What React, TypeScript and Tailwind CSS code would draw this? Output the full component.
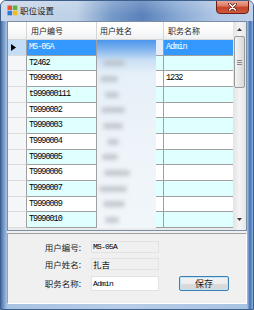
import React from 'react';

type Row = { id: string; job: string; h: string; sel?: boolean; cyan?: boolean };

const rows: Row[] = [
  { id: 'MS-05A', job: 'Admin', h: 'h-[16px]', sel: true },
  { id: 'T2462', job: '', h: 'h-[15px]', cyan: true },
  { id: 'T9990001', job: '1232', h: 'h-[16px]' },
  { id: 't999000111', job: '', h: 'h-[16px]', cyan: true },
  { id: 'T9990002', job: '', h: 'h-[15px]' },
  { id: 'T9990003', job: '', h: 'h-[16px]', cyan: true },
  { id: 'T9990004', job: '', h: 'h-[16px]' },
  { id: 'T9990005', job: '', h: 'h-[15px]', cyan: true },
  { id: 'T9990006', job: '', h: 'h-[16px]' },
  { id: 'T9990007', job: '', h: 'h-[16px]', cyan: true },
  { id: 'T9990009', job: '', h: 'h-[15px]' },
  { id: 'T9990010', job: '', h: 'h-[16px]', cyan: true },
];

const blobs = [
  { top: 'top-[20px]', w: 'w-[22px]', left: 'left-[6px]' },
  { top: 'top-[36px]', w: 'w-[18px]', left: 'left-[3px]' },
  { top: 'top-[52px]', w: 'w-[14px]', left: 'left-[8px]' },
  { top: 'top-[67px]', w: 'w-[24px]', left: 'left-[4px]' },
  { top: 'top-[83px]', w: 'w-[20px]', left: 'left-[6px]' },
  { top: 'top-[99px]', w: 'w-[12px]', left: 'left-[10px]' },
  { top: 'top-[114px]', w: 'w-[16px]', left: 'left-[5px]' },
  { top: 'top-[130px]', w: 'w-[26px]', left: 'left-[7px]' },
  { top: 'top-[146px]', w: 'w-[28px]', left: 'left-[2px]' },
  { top: 'top-[161px]', w: 'w-[22px]', left: 'left-[6px]' },
  { top: 'top-[177px]', w: 'w-[14px]', left: 'left-[8px]' },
];

const mono = "font-['Liberation_Mono','Noto_Sans_CJK_SC',monospace]";
const cjk = "font-['Noto_Sans_CJK_SC','Noto_Sans',sans-serif]";

function WinIcon() {
  return (
    <svg width="11" height="11" viewBox="0 0 11 11">
      <rect x="0.5" y="0.5" width="4.5" height="4.5" fill="#e9512f" />
      <rect x="5.8" y="0.5" width="4.5" height="4.5" fill="#5fb336" />
      <rect x="0.5" y="5.8" width="4.5" height="4.5" fill="#2c79d6" />
      <rect x="5.8" y="5.8" width="4.5" height="4.5" fill="#f5bb1b" />
    </svg>
  );
}

export default function App() {
  return (
    <div className="w-[254px] h-[310px] flex flex-col overflow-hidden rounded-t-[6px] border border-[#3d5f8c] bg-[linear-gradient(90deg,#4a70a8_0px,#7c9ecc_3px,#a9c3e3_6px,#b7cde8_50%,#a9c3e3_calc(100%_-_6px),#4070b2_calc(100%_-_3px),#8fb0da_100%)]">
      {/* title bar */}
      <div className="h-[20px] shrink-0 flex items-start bg-[linear-gradient(180deg,rgba(255,255,255,0.18),rgba(255,255,255,0)_70%),linear-gradient(90deg,#cbd8e9_0%,#bdd0e6_30%,#7599c9_44%,#5a81ba_56%,#87a8d3_70%,#afc6e5_85%,#bcd0e9_100%)]">
        <div className="ml-[6px] mt-[4px]">
          <WinIcon />
        </div>
        <div className={`${cjk} ml-[2px] mt-[2px] text-[8.5px] leading-[14px] text-[#1b1b1b]`}>职位设置</div>
        <div className="ml-auto mr-[4px] w-[33px] h-[14px] -mt-[1px] rounded-b-[4px] border border-[#6e1d12] bg-[linear-gradient(180deg,#eba898_0%,#dc7a63_40%,#c4422a_55%,#cf5a3c_100%)] flex items-center justify-center">
          <svg width="9" height="8" viewBox="0 0 9 8">
            <path d="M1.5 1 L7.5 7 M7.5 1 L1.5 7" stroke="#5a1a10" strokeWidth="3" strokeLinecap="round" />
            <path d="M1.5 1 L7.5 7 M7.5 1 L1.5 7" stroke="#ffffff" strokeWidth="1.6" strokeLinecap="round" />
          </svg>
        </div>
      </div>

      {/* client area */}
      <div className="mx-[6px] mb-[5px] flex-1 flex flex-col bg-[#f0f0f0]">
        {/* grid */}
        <div className="h-[210px] shrink-0 flex border border-[#7a8ea8] bg-[#ebebeb]">
          <div className="w-[225px] flex flex-col">
            {/* header */}
            <div className={`${cjk} h-[18px] flex text-[8px] text-[#1b1b1b] border-b border-[#d5d5d5] bg-[linear-gradient(180deg,#ffffff_0%,#fbfbfb_50%,#eef0f2_100%)]`}>
              <div className="w-[19px] border-r border-[#d5d5d5]" />
              <div className="w-[70px] border-r border-[#d5d5d5] pl-[4px] flex items-center">用户编号</div>
              <div className="w-[67px] border-r border-[#d5d5d5] pl-[3px] flex items-center">用户姓名</div>
              <div className="w-[69px] pl-[4px] flex items-center">职务名称</div>
            </div>
            {/* rows */}
            <div className="relative">
              {rows.map((r) => (
                <div key={r.id} className={`flex ${r.h}`}>
                  <div className={`w-[19px] shrink-0 border-r border-b border-r-[#a0a0a0] border-b-[#dcdcdc] flex items-center ${r.sel ? 'bg-[#c3ddf6]' : 'bg-[#f5f6f7]'}`}>
                    {r.sel && (
                      <svg width="6" height="7" viewBox="0 0 6 7" className="ml-[3px]">
                        <path d="M0 0 L5 3.5 L0 7 Z" fill="#000" />
                      </svg>
                    )}
                  </div>
                  <div className={`${mono} w-[70px] shrink-0 border-r border-b border-[#a0a0a0] pl-[2px] flex items-center text-[8.5px] tracking-[-1px] ${r.sel ? 'bg-[#3399ff] text-white' : r.cyan ? 'bg-[#e0ffff] text-black' : 'bg-white text-black'}`}>
                    {r.id}
                  </div>
                  <div className={`w-[67px] shrink-0 border-r border-b border-[#a0a0a0] ${r.sel ? 'bg-[#e3eefa]' : r.cyan ? 'bg-[#e0ffff]' : 'bg-white'}`} />
                  <div className={`${mono} w-[69px] shrink-0 border-b border-[#a0a0a0] pl-[2px] flex items-center text-[8.5px] tracking-[-1px] ${r.sel ? 'bg-[#3399ff] text-white' : r.cyan ? 'bg-[#e0ffff] text-black' : 'bg-white text-black'}`}>
                    {r.job}
                  </div>
                </div>
              ))}
              {/* blurred name column */}
              <div className="absolute left-[89px] top-0 w-[59px] h-[188px] overflow-hidden bg-[linear-gradient(180deg,#4b97ee_0px,#7fb3ee_9px,#c9dff4_20px,#e6f0f8_34px,#eef4f9_60%,#f1f6fa_100%)]">
                {blobs.map((b, i) => (
                  <div key={i} className={`absolute ${b.top} ${b.left} ${b.w} h-[6px] rounded-full bg-[#b9bec4] blur-[2px] opacity-80`} />
                ))}
              </div>
            </div>
          </div>
          {/* scrollbar */}
          <div className="w-[13px] flex flex-col bg-[linear-gradient(90deg,#e3e3e6,#f4f4f5_50%,#e6e6e9)]">
            <div className="h-[14px] flex items-center justify-center">
              <svg width="5" height="3" viewBox="0 0 5 3"><path d="M0 3 L2.5 0 L5 3 Z" fill="#3a3a3a" /></svg>
            </div>
            <div className="mx-[1px] h-[52px] rounded-[2px] border border-[#9a9a9a] bg-[linear-gradient(90deg,#f4f4f4,#e6e6e6_50%,#d8d8d8)] flex flex-col items-center justify-center gap-[1px]">
              <div className="w-[5px] h-[1px] bg-[#8a8a8a]" />
              <div className="w-[5px] h-[1px] bg-[#8a8a8a]" />
              <div className="w-[5px] h-[1px] bg-[#8a8a8a]" />
            </div>
            <div className="flex-1" />
            <div className="h-[16px] flex items-start pt-[4px] justify-center">
              <svg width="5" height="3" viewBox="0 0 5 3"><path d="M0 0 L2.5 3 L5 0 Z" fill="#3a3a3a" /></svg>
            </div>
          </div>
        </div>

        {/* detail panel */}
        <div className="mt-[2px] flex-1 flex flex-col border-t border-l border-t-[#a0a0a0] border-l-[#a0a0a0] border-b border-r border-b-white border-r-white pt-[7px]">
          <div className="flex items-center h-[12px]">
            <div className={`${cjk} w-[73px] text-right text-[8.5px] text-[#1b1b1b]`}>用户编号:</div>
            <div className={`${mono} ml-[10px] w-[68px] h-[12px] border border-[#e2e2e2] pl-[1px] flex items-center text-[8px] tracking-[-0.8px] text-black`}>MS-05A</div>
          </div>
          <div className="flex items-center h-[12px] mt-[5px]">
            <div className={`${cjk} w-[73px] text-right text-[8.5px] text-[#1b1b1b]`}>用户姓名:</div>
            <div className={`${cjk} ml-[10px] w-[68px] h-[12px] border border-[#e2e2e2] pl-[1px] flex items-center text-[8.5px] text-black`}>扎吉</div>
          </div>
          <div className="flex items-center h-[15px] mt-[6px]">
            <div className={`${cjk} w-[73px] text-right text-[8.5px] text-[#1b1b1b]`}>职务名称:</div>
            <div className={`${mono} ml-[10px] w-[68px] h-[15px] border border-[#e2e2e2] bg-white pl-[1px] flex items-center text-[8px] tracking-[-0.8px] text-black`}>Admin</div>
            <div className={`${cjk} ml-[20px] w-[50px] h-[15px] rounded-[2px] border border-[#3c7fb1] bg-[linear-gradient(180deg,#f4f4f4_0%,#ececec_50%,#dcdcdc_51%,#d6d6d6_100%)] shadow-[inset_0_0_0_1px_#bfe3f7] flex items-center justify-center text-[9px] text-[#1b1b1b]`}>保存</div>
          </div>
        </div>
      </div>
    </div>
  );
}
